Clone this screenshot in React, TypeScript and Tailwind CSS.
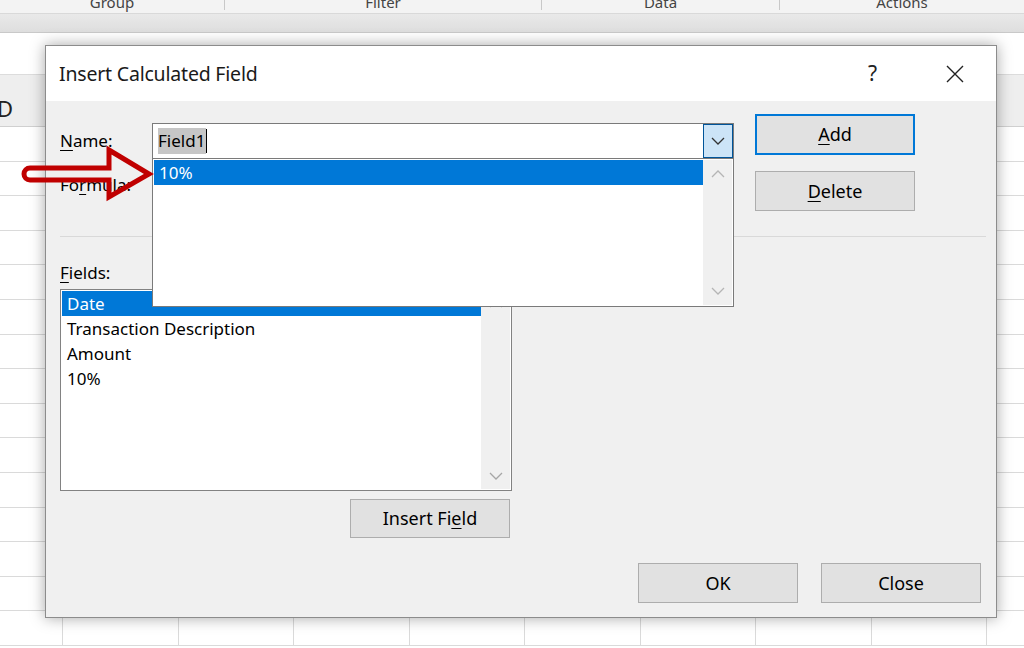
import React from "react";

type ChevronProps = { up?: boolean; className?: string };

const Chevron = ({ up = false, className = "" }: ChevronProps) => (
    <svg width="14" height="8" viewBox="0 0 14 8" className={className}>
        <path
            d={up ? "M1 7L7 1L13 7" : "M1 1L7 7L13 1"}
            fill="none"
            stroke="currentColor"
            strokeWidth={1.3}
        />
    </svg>
);

type ButtonProps = { children: React.ReactNode; primary?: boolean; className?: string };

const WinButton = ({ children, primary = false, className = "" }: ButtonProps) => (
    <div
        className={`w-[160px] flex items-center justify-center bg-[#e1e1e1] text-[18px] text-black ${
            primary ? "border-2 border-[#0078d7]" : "border border-[#adadad]"
        } ${className}`}
    >
        {children}
    </div>
);

const ribbonGroups = [
    { label: "Group", w: "w-[225px]" },
    { label: "Filter", w: "w-[317px]" },
    { label: "Data", w: "w-[238px]" },
    { label: "Actions", w: "flex-1" },
];

const rows = Array.from({ length: 15 });
const cols = Array.from({ length: 9 });

const fields = ["Date", "Transaction Description", "Amount", "10%"];

export default function App() {
    return (
        <div className="relative w-[1024px] h-[648px] overflow-hidden bg-white font-['Noto_Sans','Open_Sans',sans-serif]">
            {/* Ribbon (cut off) */}
            <div className="h-[14px] flex bg-[#f3f3f3] border-b border-[#d9d9d9] overflow-hidden">
                {ribbonGroups.map((g, i) => (
                    <div
                        key={g.label}
                        className={`${g.w} flex justify-center ${i < 3 ? "border-r border-[#c8c8c8] h-[10px]" : ""}`}
                    >
                        <span className="text-[15px] leading-none text-[#444] -mt-[5px]">{g.label}</span>
                    </div>
                ))}
            </div>
            <div className="h-[19px] bg-gradient-to-b from-[#e9e9e9] to-[#dedede] border-b border-[#c9c9c9]" />
            <div className="h-[41px] bg-white" />

            {/* Column header */}
            <div className="h-[53px] bg-[#eeeeee] border-t border-[#dcdcdc] border-b border-b-[#d0d0d0] flex items-end pb-[4px]">
                <span className="text-[22px] leading-none text-[#222] -ml-[3px] mb-[3px]">D</span>
            </div>

            {/* Sheet grid */}
            <div>
                {rows.map((_, r) => (
                    <div key={r} className="h-[34.6px] flex border-b border-[#dadada]">
                        <div className="w-[62px] shrink-0" />
                        {cols.map((_, c) => (
                            <div key={c} className="w-[115.5px] shrink-0 border-l border-[#dadada]" />
                        ))}
                    </div>
                ))}
            </div>

            {/* Dialog */}
            <div className="absolute left-[45px] top-[45px] w-[952px] h-[573px] flex flex-col border border-[#8c8c8c] shadow-[0_0_14px_rgba(0,0,0,0.35)] bg-[#f0f0f0]">
                {/* Title bar */}
                <div className="h-[55px] bg-white flex items-center pl-[13px] shrink-0">
                    <span className="text-[19.5px] text-[#1a1a1a] tracking-[-0.2px]">Insert Calculated Field</span>
                    <span className="ml-auto mr-[68px] text-[21px] text-[#222]">?</span>
                    <svg width="20" height="20" viewBox="0 0 20 20" className="mr-[31px]">
                        <path d="M2 2L18 18M18 2L2 18" stroke="#222" strokeWidth={1.4} />
                    </svg>
                </div>

                {/* Body */}
                <div className="flex-1 flex flex-col pl-[14px] pr-[15px] text-[17px] text-black">
                    <div className="h-[135px] flex">
                        <div className="w-[674px] flex flex-col pt-[22px]">
                            <div className="flex items-center h-[36px]">
                                <span className="w-[92px]">
                                    <span className="underline underline-offset-[3px]">N</span>ame:
                                </span>
                                <div className="flex-1 h-[36px] bg-white border border-[#7a7a7a] flex items-stretch">
                                    <div className="flex-1 flex items-center pl-[5px]">
                                        <span className="bg-[#c6c6c6] text-black leading-[26px] pr-[1px]">Field1</span>
                                        <span className="w-px h-[24px] bg-black" />
                                    </div>
                                    <div className="w-[30px] bg-[#cce4f7] border border-[#005499] flex items-center justify-center text-[#333]">
                                        <Chevron />
                                    </div>
                                </div>
                            </div>
                            <div className="flex items-center h-[28px] mt-[12px]">
                                <span>
                                    Fo<span className="underline underline-offset-[3px]">r</span>mula:
                                </span>
                            </div>
                        </div>
                        <div className="ml-[21px] pt-[13px] flex flex-col gap-[16px]">
                            <WinButton primary className="h-[41px]">
                                <span className="underline underline-offset-[3px]">A</span>dd
                            </WinButton>
                            <WinButton className="h-[40px]">
                                <span className="underline underline-offset-[3px]">D</span>elete
                            </WinButton>
                        </div>
                    </div>

                    <div className="h-px w-[926px] bg-[#d9d9d9]" />

                    <div className="h-[20px] mt-[26px] flex items-center">
                        <span>
                            <span className="underline underline-offset-[3px]">F</span>ields:
                        </span>
                    </div>

                    <div className="mt-[6px] w-[452px] h-[202px] bg-white border border-[#828282] flex p-[1px]">
                        <div className="flex-1 flex flex-col">
                            {fields.map((f, i) => (
                                <div
                                    key={f}
                                    className={`h-[25px] flex items-center pl-[5px] ${
                                        i === 0 ? "bg-[#0078d7] text-white" : "text-black"
                                    }`}
                                >
                                    {f}
                                </div>
                            ))}
                        </div>
                        <div className="w-[29px] bg-[#f0f0f0] flex flex-col items-center justify-between py-[9px] text-[#a6a6a6]">
                            <Chevron up />
                            <Chevron />
                        </div>
                    </div>

                    <WinButton className="h-[39px] mt-[8px] ml-[290px]">
                        Insert Fi<span className="underline underline-offset-[3px]">e</span>ld
                    </WinButton>

                    <div className="mt-[25px] flex justify-end gap-[23px]">
                        <WinButton className="h-[40px]">OK</WinButton>
                        <WinButton className="h-[40px]">Close</WinButton>
                    </div>
                </div>

                {/* Open dropdown list */}
                <div className="absolute left-[106px] top-[112px] w-[582px] h-[149px] bg-white border border-[#7a7a7a] flex p-[1px] text-[17px]">
                    <div className="flex-1">
                        <div className="h-[25px] flex items-center pl-[5px] bg-[#0078d7] text-white">10%</div>
                    </div>
                    <div className="w-[29px] bg-[#f0f0f0] flex flex-col items-center justify-between py-[10px] text-[#b5b5b5]">
                        <Chevron up />
                        <Chevron />
                    </div>
                </div>
            </div>

            {/* Red callout arrow */}
            <svg className="absolute left-0 top-0 pointer-events-none" width="170" height="220" viewBox="0 0 170 220">
                <path
                    d="M30 168 L109 168 L109 150 L149 174 L109 197 L109 180 L30 180 A6 6 0 0 1 30 168 Z"
                    fill="none"
                    stroke="#c00000"
                    strokeWidth={5}
                    strokeLinejoin="miter"
                />
            </svg>
        </div>
    );
}
